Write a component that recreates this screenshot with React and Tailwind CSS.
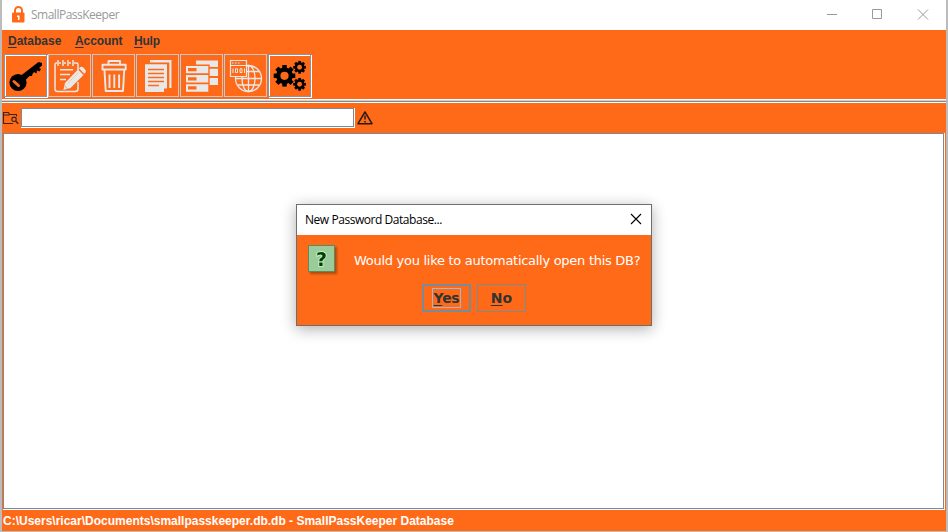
import React from "react";

function Lock() {
  return (
    <svg width="13" height="17" viewBox="0 0 13 17" className="-mt-[2px] ml-[10px]">
      <path d="M3 8V4.500a3.500 3.500 0 0 1 7 0V8" fill="none" stroke="#ff6a19" strokeWidth="2" />
      <rect x="0" y="6.500" width="12.500" height="10" rx="1" fill="#ff6a19" />
      <path d="M5 9.500h2.500v4.500h-1.500v-3H5z" fill="#fff" />
    </svg>
  );
}

function KeyIcon() {
  return (
    <svg width="42" height="42" viewBox="0 0 42 42">
      <circle cx="13" cy="27.500" r="8.600" fill="#000" />
      <path d="M16 20.500 33.500 7 37 8 37 10.500 34 13 36 14 34.500 16.500 32 15.500 31.500 18.500 29 17 27.500 19 27 21 24.500 21 20.500 25Z" fill="#000" />
      <path d="M9 26.500 13.500 30.500" stroke="#ff6a19" strokeWidth="3" strokeLinecap="round" />
    </svg>
  );
}

function NoteIcon() {
  return (
    <svg width="42" height="42" viewBox="0 0 42 42" fill="none" stroke="#e8e8e8" strokeWidth="1.500">
      <path d="M8 8H7.500Q6 8 6 9.500V34Q6 36.500 8.500 36.500H26Q29 36.500 29 34V27M10 8H12M15 8H17M20 8H22M25 8H27.500Q29 8 29 9.500V15" />
      <path d="M9 5V11M14 5V11M19 5V11M24 5V11M11 14.800H24M11 19.500H21M11 24.500H17" />
      <path d="M14.300 35 16 28 29 14.500 34.500 20 21.500 33Z" fill="#e8e8e8" stroke="none" />
      <path d="M30 13.300 31.500 12Q32.800 11.200 34 12.300L36.500 15Q37.200 16.200 36.500 17.300L35.300 18.800Z" fill="#e8e8e8" stroke="none" />
      <path d="M18.500 28.500 29.500 17.500" stroke="#ffb78e" strokeWidth=".7" />
      <path d="M15.500 30.500 18.500 34" stroke="#ff8d4f" strokeWidth=".8" />
    </svg>
  );
}

function TrashIcon() {
  return (
    <svg width="42" height="42" viewBox="0 0 42 42" fill="none" stroke="#e8e8e8" strokeWidth="1.900" strokeLinejoin="round">
      <path d="M15.500 9V6H27V9M9.500 9.800H32.700V14.500H9.500ZM11.500 15.500 12.700 36H30L31.200 15.500" />
      <path d="M16.500 19.500V33M21.300 19.500V33M26.100 19.500V33" />
    </svg>
  );
}

function CopyIcon() {
  return (
    <svg width="42" height="42" viewBox="0 0 42 42">
      <path d="M13 5H34.500V33H32.300V7.500H13Z" fill="#e8e8e8" />
      <path d="M8 9.300H30V33.500H27V37H8Z" fill="#e8e8e8" />
      <path d="M11 14.500H27M11 18.500H27M11 22.500H27M11 26.500H27M11 30.500H22" stroke="#ff6a19" strokeWidth="1.400" />
    </svg>
  );
}

function ServerIcon() {
  return (
    <svg width="42" height="42" viewBox="0 0 42 42">
      <path d="M15 5.500H37V12H28.700V9.500H15ZM28.700 13.700H37V21H28.700ZM28.700 23H37V30H28.700Z" fill="#e8e8e8" />
      <path d="M5 11H27.300V18.300H5ZM5 20H27.300V27.500H5ZM5 29.300H27.300V36.700H5Z" fill="#e8e8e8" />
      <path d="M7 13H15.500V16.300H7ZM7 22.300H15.500V25.500H7ZM7 31.300H15.500V34.500H7Z" fill="#ff6a19" />
    </svg>
  );
}

function WebIcon() {
  return (
    <svg width="42" height="42" viewBox="0 0 42 42" fill="none" stroke="#e8e8e8">
      <g strokeWidth="1.300">
        <circle cx="23.500" cy="23.500" r="13" />
        <ellipse cx="23.500" cy="23.500" rx="6.500" ry="13" />
        <path d="M23.500 10.500V36.500M10.500 23.500H36.500M13 16.500H34M13 30H34" />
      </g>
      <path d="M5.500 5.500H21.500V21.500H5.500Z" fill="#ff6a19" strokeWidth="1.200" />
      <path d="M5 10.500H22M7 8H8.500M10 8H11.500M13 8H14.500" />
      <path d="M8 13.500V18M10.500 13.800H12.500V17.500H10.500ZM15 13.800H17V17.500H15ZM19.500 13.500V18" />
    </svg>
  );
}

function Gear({ x, y, s }) {
  return (
    <g transform={`translate(${x} ${y}) scale(${s})`}>
      {[0, 45, 90, 135].map((a) => (
        <rect key={a} x="-2.300" y="-11" width="4.600" height="22" transform={`rotate(${a})`} fill="#000" />
      ))}
      <circle r="6.300" fill="none" stroke="#000" strokeWidth="4.500" />
      <circle r="4.200" fill="#ff6a19" />
    </g>
  );
}

function GearsIcon() {
  return (
    <svg width="42" height="42" viewBox="0 0 42 42">
      <Gear x="15.500" y="20.800" s="0.98" />
      <Gear x="30.600" y="12.300" s="0.58" />
      <Gear x="30.600" y="29.300" s="0.58" />
    </svg>
  );
}

const tools = [KeyIcon, NoteIcon, TrashIcon, CopyIcon, ServerIcon, WebIcon, GearsIcon];

function ToolButton({ Icon, enabled }) {
  return (
    <div
      className={
        enabled
          ? "h-[43px] w-[43px] border border-[#8a959f] shadow-[inset_1px_1px_0_#fff,1px_1px_0_#fff]"
          : "h-[43px] w-[43px] border border-[#c3c9cd]"
      }
    >
      <Icon />
    </div>
  );
}

function Menu({ label, className }) {
  return (
    <span className={className}>
      <span className="underline decoration-1 underline-offset-2">{label[0]}</span>
      {label.slice(1)}
    </span>
  );
}

function Dialog() {
  return (
    <div className="absolute left-[294px] top-[204px] flex h-[122px] w-[356px] flex-col border border-[#6f6f68] bg-[#ff6a19] shadow-[0_3px_14px_rgba(0,0,0,0.32)]">
      <div className="flex h-[30px] shrink-0 items-center justify-between bg-white pl-2 pr-[9px]">
        <span className="whitespace-nowrap font-['Open_Sans','Noto_Sans',sans-serif] text-[12px] tracking-[-0.45px] text-black">New Password Database...</span>
        <svg width="12" height="12" viewBox="0 0 12 12" className="-translate-y-px" stroke="#000" strokeWidth="1.100">
          <path d="M1 1 11 11M11 1 1 11" />
        </svg>
      </div>
      <div className="flex h-[49px] shrink-0 pl-[11px] pt-[10px]">
        <svg width="30" height="30" viewBox="0 0 30 30" className="shrink-0 overflow-visible drop-shadow-[2px_2px_1px_rgba(100,50,0,0.55)]">
          <rect x=".5" y=".5" width="26" height="26" fill="#9bca9b" stroke="#5c8a5c" />
          <text x="13.500" y="20.700" textAnchor="middle" fontSize="19" fontWeight="bold" fontFamily="DejaVu Sans" fill="#003d00" stroke="#c9f5c9" strokeWidth="1.600" paintOrder="stroke">?</text>
        </svg>
        <div className="ml-4 mt-2 whitespace-nowrap font-['DejaVu_Sans',sans-serif] text-[13px] leading-[16px] tracking-[-0.28px] text-white">
          Would you like to automatically open this DB?
        </div>
      </div>
      <div className="flex gap-[6px] pl-[125px] font-['DejaVu_Sans',sans-serif] text-[14px] font-bold leading-[19px] text-[#333]">
        <div className="flex h-7 w-[49px] items-center justify-center border-2 border-[#7a8a99]">
          <span className="flex h-5 w-[29px] items-center justify-center border border-[#a3b8cc] tracking-[-0.3px]">
            <Menu label="Yes" />
          </span>
        </div>
        <div className="flex h-7 w-[49px] items-center justify-center border border-[#7a8a99]">
          <Menu label="No" />
        </div>
      </div>
    </div>
  );
}

export default function App() {
  return (
    <div className="relative flex h-[532px] w-[948px] flex-col overflow-hidden border-b border-l-2 border-r-2 border-[#bcbcbc] bg-[#ff6a19] font-['Liberation_Sans',Arial,sans-serif]">
      <header className="flex h-[30px] shrink-0 items-center bg-white">
        <Lock />
        <span className="ml-[6px] font-['Open_Sans','Noto_Sans',sans-serif] text-[12px] tracking-[-0.5px] text-[#999]">SmallPassKeeper</span>
        <svg width="106" height="12" viewBox="0 0 106 12" className="ml-auto mr-4 -translate-y-px" fill="none" stroke="#999">
          <path d="M3 6.500H13M48.500 1.500H57.500V10.500H48.500Z" />
          <path d="M94 1.500 104 11.500M104 1.500 94 11.500" />
        </svg>
      </header>
      <nav className="flex h-6 shrink-0 items-center pb-[2px] pl-[6px] text-[12px] font-bold text-[#333]">
        <Menu label="Database" className="w-[67px]" />
        <Menu label="Account" className="w-[59px] tracking-[-0.1px]" />
        <Menu label="Hulp" className="tracking-[-0.2px]" />
      </nav>
      <div className="flex h-[45px] shrink-0 gap-px pl-[2px]">
        {tools.map((Icon, i) => (
          <ToolButton key={i} Icon={Icon} enabled={i === 0 || i === 6} />
        ))}
      </div>
      <div className="h-1 shrink-0 border-b border-t border-white bg-[#7a8a99]">
        <div className="h-px bg-[#d0d0d0]" />
      </div>
      <div className="flex h-[30px] shrink-0 items-center">
        <svg width="19" height="16" viewBox="0 0 19 16" fill="none" stroke="#3a2417" strokeWidth="1.100">
          <path d="M11 13.500H1.500V2.500H6.500L7.500 4.500H14.500V6.500M1.500 5H7.500" />
          <circle cx="12" cy="9.300" r="2.200" />
          <path d="M13.800 11.200 16.300 13.700" strokeWidth="1.500" />
        </svg>
        <div className="h-[20px] w-[334px] border-b border-r border-white">
          <div className="h-[19px] w-[333px] border border-[#7a8a99] bg-white" />
        </div>
        <svg width="18" height="16" viewBox="0 0 18 16" className="ml-px" fill="none" stroke="#2a1a10" strokeWidth="1.500">
          <path d="M9 2 16 13.700H2Z" strokeLinejoin="round" />
          <path d="M9 5.500V9.500M9 11V12.500" strokeWidth="1.500" />
        </svg>
      </div>
      <main className="ml-px mr-px flex h-[377px] shrink-0 border-b border-r border-white">
        <div className="flex-1 border border-[#7a8a99] bg-white" />
      </main>
      <footer className="flex h-[21px] shrink-0 items-center pl-px text-[12px] font-bold text-white">
        C:\Users\ricar\Documents\smallpasskeeper.db.db - SmallPassKeeper Database
      </footer>
      <Dialog />
    </div>
  );
}
